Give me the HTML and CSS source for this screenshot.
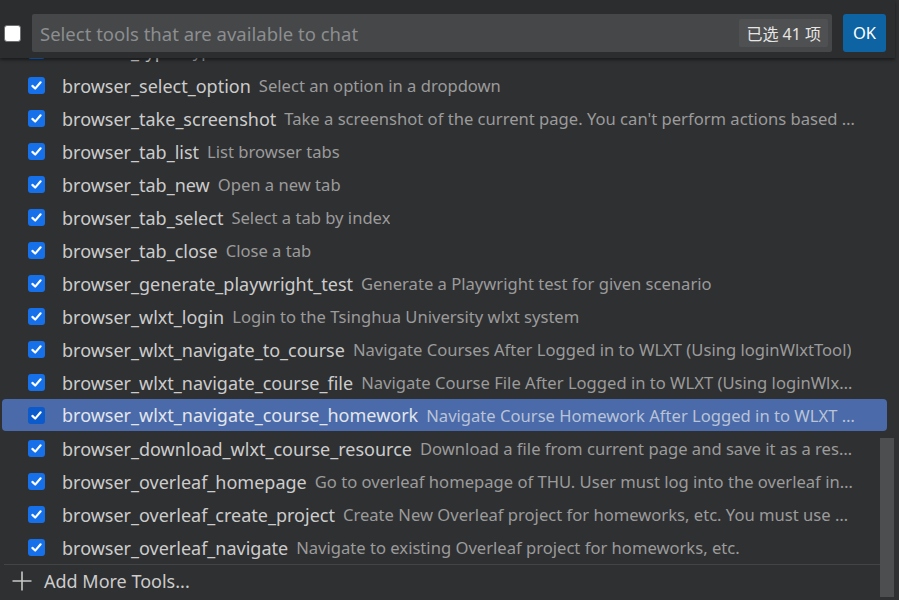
FILE: index.html
```html
<!DOCTYPE html>
<html lang="en">
<head>
<meta charset="utf-8">
<title>Select tools</title>
<link rel="stylesheet" href="styles.css">
</head>
<body>
<div class="widget">
  <div class="header">
    <span class="hcheck"></span>
    <div class="input">
      <span class="placeholder">Select tools that are available to chat</span>
      <span class="badge">已选 41 项</span>
    </div>
    <button class="ok">OK</button>
  </div>

  <div class="list">
    <div class="partial">
      <div class="row">
        <span class="cb"><svg viewBox="0 0 16 16"><path d="M3.6 8.4 L6.6 11.3 L12.4 4.6"/></svg></span>
        <span class="name">browser_type</span>
        <span class="desc">Type text into editable element</span>
      </div>
    </div>
    <div class="row"><span class="cb"><svg viewBox="0 0 16 16"><path d="M3.6 8.4 L6.6 11.3 L12.4 4.6"/></svg></span><span class="name">browser_select_option</span><span class="desc">Select an option in a dropdown</span></div>
    <div class="row"><span class="cb"><svg viewBox="0 0 16 16"><path d="M3.6 8.4 L6.6 11.3 L12.4 4.6"/></svg></span><span class="name">browser_take_screenshot</span><span class="desc">Take a screenshot of the current page. You can't perform actions based on the screenshot, use browser_snapshot for actions.</span></div>
    <div class="row"><span class="cb"><svg viewBox="0 0 16 16"><path d="M3.6 8.4 L6.6 11.3 L12.4 4.6"/></svg></span><span class="name">browser_tab_list</span><span class="desc">List browser tabs</span></div>
    <div class="row"><span class="cb"><svg viewBox="0 0 16 16"><path d="M3.6 8.4 L6.6 11.3 L12.4 4.6"/></svg></span><span class="name">browser_tab_new</span><span class="desc">Open a new tab</span></div>
    <div class="row"><span class="cb"><svg viewBox="0 0 16 16"><path d="M3.6 8.4 L6.6 11.3 L12.4 4.6"/></svg></span><span class="name">browser_tab_select</span><span class="desc">Select a tab by index</span></div>
    <div class="row"><span class="cb"><svg viewBox="0 0 16 16"><path d="M3.6 8.4 L6.6 11.3 L12.4 4.6"/></svg></span><span class="name">browser_tab_close</span><span class="desc">Close a tab</span></div>
    <div class="row"><span class="cb"><svg viewBox="0 0 16 16"><path d="M3.6 8.4 L6.6 11.3 L12.4 4.6"/></svg></span><span class="name">browser_generate_playwright_test</span><span class="desc">Generate a Playwright test for given scenario</span></div>
    <div class="row"><span class="cb"><svg viewBox="0 0 16 16"><path d="M3.6 8.4 L6.6 11.3 L12.4 4.6"/></svg></span><span class="name">browser_wlxt_login</span><span class="desc">Login to the Tsinghua University wlxt system</span></div>
    <div class="row"><span class="cb"><svg viewBox="0 0 16 16"><path d="M3.6 8.4 L6.6 11.3 L12.4 4.6"/></svg></span><span class="name">browser_wlxt_navigate_to_course</span><span class="desc">Navigate Courses After Logged in to WLXT (Using loginWlxtTool)</span></div>
    <div class="row"><span class="cb"><svg viewBox="0 0 16 16"><path d="M3.6 8.4 L6.6 11.3 L12.4 4.6"/></svg></span><span class="name">browser_wlxt_navigate_course_file</span><span class="desc">Navigate Course File After Logged in to WLXT (Using loginWlxtTool)</span></div>
    <div class="row selected"><span class="cb"><svg viewBox="0 0 16 16"><path d="M3.6 8.4 L6.6 11.3 L12.4 4.6"/></svg></span><span class="name">browser_wlxt_navigate_course_homework</span><span class="desc">Navigate Course Homework After Logged in to WLXT (Using loginWlxtTool)</span></div>
    <div class="row"><span class="cb"><svg viewBox="0 0 16 16"><path d="M3.6 8.4 L6.6 11.3 L12.4 4.6"/></svg></span><span class="name">browser_download_wlxt_course_resource</span><span class="desc">Download a file from current page and save it as a resource</span></div>
    <div class="row"><span class="cb"><svg viewBox="0 0 16 16"><path d="M3.6 8.4 L6.6 11.3 L12.4 4.6"/></svg></span><span class="name">browser_overleaf_homepage</span><span class="desc">Go to overleaf homepage of THU. User must log into the overleaf in the browser first.</span></div>
    <div class="row"><span class="cb"><svg viewBox="0 0 16 16"><path d="M3.6 8.4 L6.6 11.3 L12.4 4.6"/></svg></span><span class="name">browser_overleaf_create_project</span><span class="desc">Create New Overleaf project for homeworks, etc. You must use  browser_overleaf_homepage first.</span></div>
    <div class="row"><span class="cb"><svg viewBox="0 0 16 16"><path d="M3.6 8.4 L6.6 11.3 L12.4 4.6"/></svg></span><span class="name">browser_overleaf_navigate</span><span class="desc">Navigate to existing Overleaf project for homeworks, etc.</span></div>
  </div>

  <div class="footer">
    <svg class="plus" viewBox="0 0 20 20"><path d="M10 0.5 V19.5 M0.5 10 H19.5"/></svg>
    <span class="add">Add More Tools...</span>
  </div>

  <div class="scrollbar"></div>
</div>
</body>
</html>
```

FILE: styles.css
```css
* { box-sizing: border-box; }

html, body {
  margin: 0;
  padding: 0;
  background: #2f3032;
}

body {
  font-family: "Noto Sans", "Noto Sans CJK SC", sans-serif;
  color: #cccccc;
}

.widget {
  position: relative;
  width: 899px;
  height: 600px;
  display: flex;
  flex-direction: column;
  overflow: hidden;
  background: #2f3032;
}

/* ---------- header ---------- */
.header {
  position: relative;
  z-index: 2;
  flex: 0 0 58px;
  display: flex;
  align-items: center;
  padding: 8px 0 0 4px;
  margin-right: 4px;
  background: #2c2d2f;
  box-shadow: 0 2px 3px rgba(0, 0, 0, 0.45);
}

.hcheck {
  flex: 0 0 17px;
  width: 17px;
  height: 17px;
  border-radius: 3px;
  background: #ffffff;
  border: 1px solid #6f7072;
}

.input {
  margin-left: 11px;
  width: 800px;
  height: 38px;
  border-radius: 2px;
  background: #454749;
  display: flex;
  align-items: center;
  justify-content: space-between;
  padding: 0 4px 0 8px;
}

.placeholder {
  font-size: 18.5px;
  color: #8c8e90;
  white-space: nowrap;
}

.badge {
  height: 28px;
  display: flex;
  align-items: center;
  padding: 0 7px;
  border-radius: 2px;
  background: #4f5051;
  color: #e6e6e6;
  font-size: 16px;
  font-family: "Noto Sans", "Noto Sans CJK SC", sans-serif;
  white-space: nowrap;
}

.ok {
  margin-left: 11px;
  width: 43px;
  height: 38px;
  border: none;
  border-radius: 3px;
  background: #0e63a2;
  color: #ffffff;
  font-family: "Noto Sans", sans-serif;
  font-size: 16.5px;
  padding: 0;
  margin-top: -1px;
}

/* ---------- list ---------- */
.list {
  flex: 1 1 auto;
  display: flex;
  flex-direction: column;
  overflow: hidden;
}

.partial {
  flex: 0 0 11px;
  display: flex;
  flex-direction: column;
  justify-content: flex-end;
  overflow: hidden;
  padding-bottom: 2px;
}

.row {
  flex: 0 0 33px;
  height: 33px;
  margin: 0 12px 0 2px;
  display: flex;
  align-items: center;
  padding: 0 30px 0 26px;
  border-radius: 4px;
  white-space: nowrap;
  min-width: 0;
}

.row.selected {
  flex-basis: 32px;
  height: 32px;
  margin-bottom: 1px;
  background: #4a6aa9;
}

.cb {
  flex: 0 0 17px;
  width: 17px;
  height: 17px;
  border-radius: 3px;
  background: #1570ea;
  display: flex;
  align-items: center;
  justify-content: center;
}

.selected .cb {
  background: #0c5bcd;
}

.cb svg {
  width: 15px;
  height: 15px;
  fill: none;
  stroke: #ffffff;
  stroke-width: 2.3;
  stroke-linecap: round;
  stroke-linejoin: round;
}

.name {
  flex: 0 0 auto;
  margin-left: 17px;
  font-size: 18px;
  color: #cccccc;
}

.selected .name {
  color: #e3e6ec;
}

.desc {
  flex: 0 1 auto;
  min-width: 0;
  margin-left: 8px;
  font-size: 16.6px;
  color: #9b9b9b;
  overflow: hidden;
  text-overflow: ellipsis;
}

.selected .desc {
  color: #b9c3d8;
}

/* ---------- footer ---------- */
.footer {
  flex: 0 0 36px;
  display: flex;
  align-items: center;
  margin: 0 15px 0 4px;
  padding: 0 0 3px 8px;
  border-top: 1px solid #434446;
}

.plus {
  width: 20px;
  height: 20px;
  fill: none;
  stroke: #c8c8c8;
  stroke-width: 1.6;
}

.add {
  margin-left: 12px;
  font-size: 18px;
  color: #cccccc;
}

/* overlay scrollbar */
.scrollbar {
  position: absolute;
  right: 5px;
  top: 438px;
  bottom: 3px;
  width: 14px;
  background: #4d4e4f;
}
```
